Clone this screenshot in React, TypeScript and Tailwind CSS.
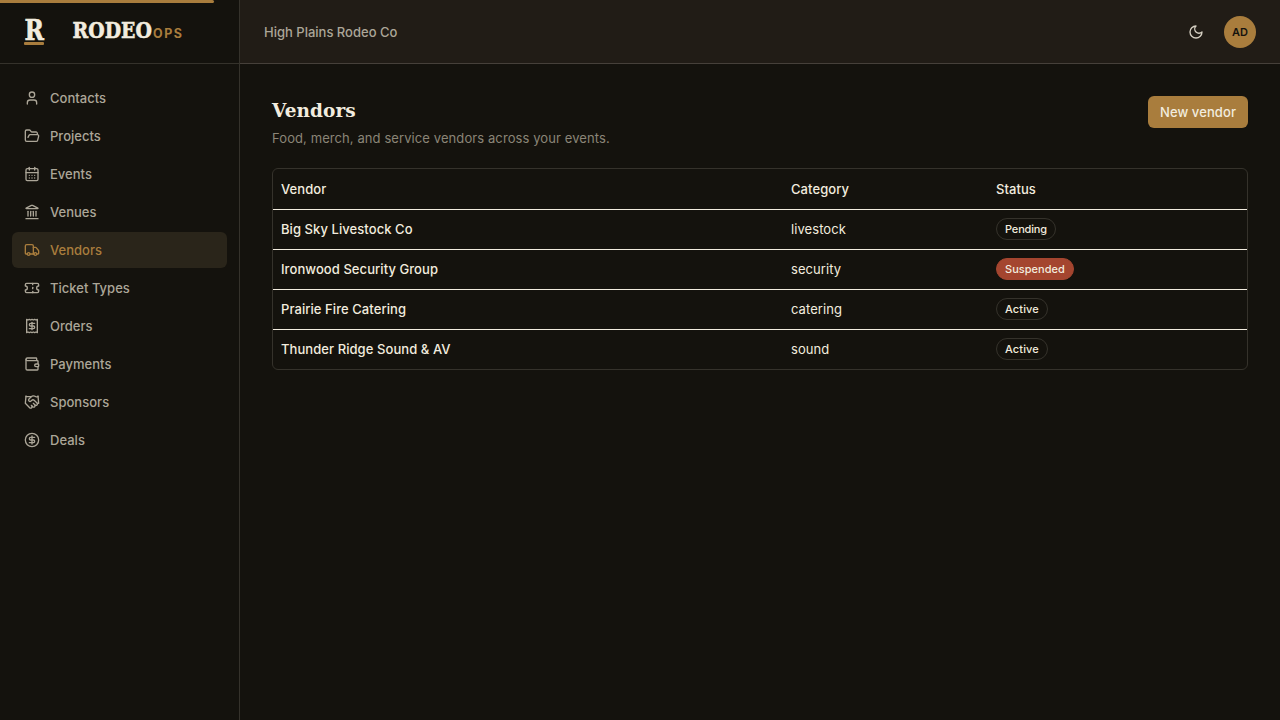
import {
  CalendarDays,
  CircleDollarSign,
  FolderOpen,
  Handshake,
  Landmark,
  Receipt,
  Ticket,
  Truck,
  User,
  Wallet,
  type LucideIcon,
} from 'lucide-react';
import clsx from 'clsx';

interface NavItem {
  label: string;
  icon: LucideIcon;
}

interface Vendor {
  name: string;
  category: string;
  status: 'Pending' | 'Suspended' | 'Active';
}

const navItems: NavItem[] = [
  { label: 'Contacts', icon: User },
  { label: 'Projects', icon: FolderOpen },
  { label: 'Events', icon: CalendarDays },
  { label: 'Venues', icon: Landmark },
  { label: 'Vendors', icon: Truck },
  { label: 'Ticket Types', icon: Ticket },
  { label: 'Orders', icon: Receipt },
  { label: 'Payments', icon: Wallet },
  { label: 'Sponsors', icon: Handshake },
  { label: 'Deals', icon: CircleDollarSign },
];

const vendors: Vendor[] = [
  { name: 'Big Sky Livestock Co', category: 'livestock', status: 'Pending' },
  { name: 'Ironwood Security Group', category: 'security', status: 'Suspended' },
  { name: 'Prairie Fire Catering', category: 'catering', status: 'Active' },
  { name: 'Thunder Ridge Sound & AV', category: 'sound', status: 'Active' },
];

const Logo = () => (
  <svg width="160" height="40" viewBox="0 -4 160 40" role="img" aria-label="RodeoOps" className="overflow-visible">
    <g
      fill="#f2ecdf"
      stroke="#f2ecdf"
      strokeWidth="0.6"
      fontWeight="700"
      className="font-['DejaVu_Serif',serif]"
    >
      <text x="0.4" y="23.8" fontSize="28" textLength="19.5" lengthAdjust="spacingAndGlyphs">R</text>
      <text x="48.5" y="22.2" fontSize="21.5" textLength="79.5" lengthAdjust="spacingAndGlyphs">RODEO</text>
    </g>
    <rect x="0" y="26" width="20" height="3" rx="1" fill="#a97d3d" />
    <text
      x="129"
      y="22.3"
      fontSize="12.5"
      fontWeight="700"
      textLength="29"
      fill="#a97d3d"
      className="font-['Inter',sans-serif]"
    >
      OPS
    </text>
  </svg>
);

const MoonIcon = () => (
  <svg
    width="16"
    height="16"
    viewBox="0 0 24 24"
    fill="none"
    stroke="currentColor"
    strokeWidth="2"
    strokeLinecap="round"
    strokeLinejoin="round"
  >
    <path d="M12 3a6 6 0 0 0 9 9 9 9 0 1 1-9-9Z" />
  </svg>
);

const Sidebar = () => (
  <aside className="flex w-60 shrink-0 flex-col border-r border-[#35322b]">
    <div className="flex h-16 shrink-0 items-center border-b border-[#35322b] px-6">
      <Logo />
    </div>
    <nav className="flex flex-col gap-0.5 px-3 py-4">
      {navItems.map(({ label, icon: Icon }) => (
        <a
          key={label}
          href="#"
          className={clsx(
            'flex h-9 items-center gap-2.5 rounded-md px-3 font-[450] tracking-[0.02px]',
            label === 'Vendors' ? 'bg-[#2a251a] text-[#a97d3d]' : 'text-[#aca698]'
          )}
        >
          <Icon size={16} />
          {label}
        </a>
      ))}
    </nav>
  </aside>
);

const StatusBadge = ({ status }: { status: Vendor['status'] }) => (
  <span
    className={clsx(
      'inline-flex h-[22px] items-center rounded-full border px-2 text-[11px] font-medium',
      status === 'Suspended' ? 'border-[#a4452f] bg-[#a4452f] tracking-[0.04px]' : 'border-[#35322b]',
      status === 'Pending' && 'tracking-[-0.16px]',
      status === 'Active' && 'tracking-[0.12px]'
    )}
  >
    {status}
  </span>
);

const VendorTable = () => (
  <div className="mt-5 rounded-md border border-[#35322b]">
    <div className="grid h-[41px] grid-cols-[510px_205px_1fr] items-center border-b border-[#f2ecdf] font-[450]">
      <div className="px-2">Vendor</div>
      <div className="px-2">Category</div>
      <div className="px-2">Status</div>
    </div>
    {vendors.map((vendor) => (
      <div
        key={vendor.name}
        className="grid h-10 grid-cols-[510px_205px_1fr] items-center border-b border-[#f2ecdf] pb-0.5 last:h-[39px] last:border-b-0"
      >
        <div className="px-2 font-[450]">{vendor.name}</div>
        <div className="px-2">{vendor.category}</div>
        <div className="flex px-2">
          <StatusBadge status={vendor.status} />
        </div>
      </div>
    ))}
  </div>
);

const App = () => {
  return (
    <div className="relative flex h-screen overflow-hidden bg-[#14120d] font-['Inter',sans-serif] text-[13px] leading-5 tracking-[0.07px] text-[#f2ecdf]">
      {/* page loading progress */}
      <div className="absolute left-0 top-0 h-[3px] w-[214px] rounded-r-sm bg-[#a97d3d]" />
      <Sidebar />
      <div className="flex min-w-0 flex-1 flex-col">
        <header className="flex h-16 shrink-0 items-center justify-between border-b border-[#46403a] bg-[#211c16] px-6">
          <span className="font-[450] tracking-normal text-[#aca698]">High Plains Rodeo Co</span>
          <div className="flex items-center gap-3">
            <button className="flex size-8 items-center justify-center text-[#d5cfc2]">
              <MoonIcon />
            </button>
            <div className="flex size-8 items-center justify-center rounded-full bg-[#a97d3d] text-[11px] font-semibold text-[#14120d]">
              AD
            </div>
          </div>
        </header>
        <main className="flex-1 p-8">
          <div className="flex items-start justify-between">
            <div>
              <h1 className="pt-0.5 font-['DejaVu_Serif',serif] text-[18.5px] font-bold leading-[26px]">Vendors</h1>
              <p className="mt-1 tracking-[0.09px] text-[#8b8577]">Food, merch, and service vendors across your events.</p>
            </div>
            <button className="flex h-8 w-[100px] items-center justify-center rounded-md bg-[#a97d3d] font-[450] tracking-[0.1px]">
              New vendor
            </button>
          </div>
          <VendorTable />
        </main>
      </div>
    </div>
  );
};

export default App;
